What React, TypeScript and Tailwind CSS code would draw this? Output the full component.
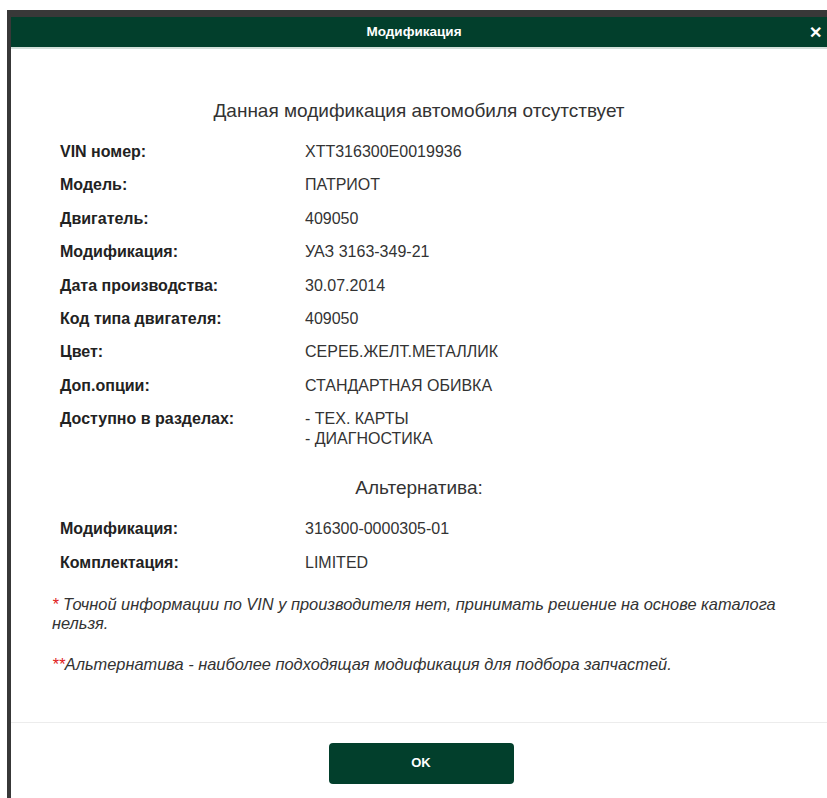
import React from "react";

type Row = { label: string; value: React.ReactNode };

const mainRows: Row[] = [
  { label: "VIN номер:", value: "XTT316300E0019936" },
  { label: "Модель:", value: "ПАТРИОТ" },
  { label: "Двигатель:", value: "409050" },
  { label: "Модификация:", value: "УАЗ 3163-349-21" },
  { label: "Дата производства:", value: "30.07.2014" },
  { label: "Код типа двигателя:", value: "409050" },
  { label: "Цвет:", value: "СЕРЕБ.ЖЕЛТ.МЕТАЛЛИК" },
  { label: "Доп.опции:", value: "СТАНДАРТНАЯ ОБИВКА" },
  {
    label: "Доступно в разделах:",
    value: (
      <>
        <div>- ТЕХ. КАРТЫ</div>
        <div>- ДИАГНОСТИКА</div>
      </>
    ),
  },
];

const altRows: Row[] = [
  { label: "Модификация:", value: "316300-0000305-01" },
  { label: "Комплектация:", value: "LIMITED" },
];

function InfoRows({ rows }: { rows: Row[] }) {
  return (
    <div className="flex flex-col gap-[13.4px] pl-[49px]">
      {rows.map((r, i) => (
        <div key={i} className="flex text-[16px] leading-[20px]">
          <div className="w-[245px] shrink-0 font-bold text-[#222]">{r.label}</div>
          <div className="text-[#333]">{r.value}</div>
        </div>
      ))}
    </div>
  );
}

export default function App() {
  return (
    <div
      className="min-h-[798px] bg-white pt-[10px] pl-[7px]"
      style={{ fontFamily: '"Liberation Sans", Arial, sans-serif' }}
    >
      <div className="flex min-h-[788px] flex-col border-l-4 border-t-[7px] border-[#383838] bg-white">
        {/* title bar */}
        <div className="relative flex h-[32px] items-center justify-center border-b-2 border-[#d3dfda] bg-[#023f2c] pr-[10px]">
          <span className="text-[13.5px] font-bold text-white">Модификация</span>
          <span className="absolute right-[5px] top-[6px] text-[16px] font-bold leading-[20px] text-white">
            ✕
          </span>
        </div>

        {/* body */}
        <div className="flex-1 pt-[52px]">
          <div className="text-center text-[19px] leading-[20px] text-[#333]">
            Данная модификация автомобиля отсутствует
          </div>

          <div className="pt-[21px]">
            <InfoRows rows={mainRows} />
          </div>

          <div className="pt-[29px] text-center text-[19px] leading-[20px] text-[#333]">
            Альтернатива:
          </div>

          <div className="pt-[21px]">
            <InfoRows rows={altRows} />
          </div>

          <div className="pt-[22px] pl-[41px] pr-[30px] text-[16.4px] italic leading-[19px] text-[#333]">
            <p>
              <span className="text-[#e02020]">*</span> Точной информации по VIN у производителя нет,
              принимать решение на основе каталога нельзя.
            </p>
            <p className="pt-[22px]">
              <span className="text-[#e02020]">**</span>Альтернатива - наиболее подходящая модификация
              для подбора запчастей.
            </p>
          </div>
        </div>

        {/* footer */}
        <div className="mt-[48px] flex justify-center border-t border-[#ececec] pt-[20px] pb-[15px] pl-[4px]">
          <button className="h-[41px] w-[185px] rounded-[4px] bg-[#023f2c] text-[13px] font-bold text-white">
            OK
          </button>
        </div>
      </div>
    </div>
  );
}
